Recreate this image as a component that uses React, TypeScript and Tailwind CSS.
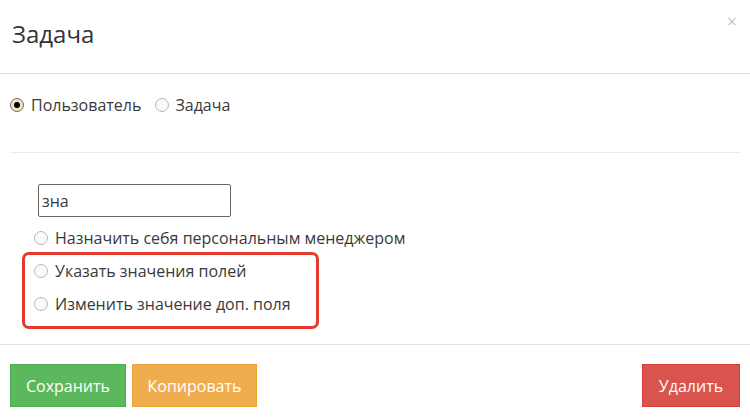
import React from "react";

function Radio({ checked = false }: { checked?: boolean }) {
  return checked ? (
    <span className="flex h-[14px] w-[14px] shrink-0 items-center justify-center rounded-full border border-[#6b6b6b] bg-[#f4e3c1]">
      <span className="h-[6px] w-[6px] rounded-full bg-black" />
    </span>
  ) : (
    <span className="h-[14px] w-[14px] shrink-0 rounded-full border border-[#b8b8b8] bg-[#fafafa]" />
  );
}

function Option({ label, h = "h-[33px]" }: { label: string; h?: string }) {
  return (
    <label className={`flex items-center gap-[7px] ${h}`}>
      <Radio />
      <span className="text-[16px] text-[#3a3a3a]">{label}</span>
    </label>
  );
}

export default function App() {
  return (
    <div
      className="h-[420px] w-[750px] overflow-hidden bg-white text-[#333]"
      style={{ fontFamily: '"Open Sans", "Liberation Sans", sans-serif' }}
    >
      {/* Header */}
      <div className="flex h-[74px] items-start justify-between border-b border-[#e0e0e0] pl-[12px] pr-[13px]">
        <h1 className="pt-[18px] text-[24px] font-normal leading-[32px] text-[#333]">Задача</h1>
        <span className="pt-[12px] text-[18px] leading-none text-[#c8c8c8]">×</span>
      </div>

      {/* Body */}
      <div className="px-[10px]">
        <div className="flex h-[79px] items-start gap-[7px] border-b border-[#ebebeb] pt-[19px]">
          <label className="flex h-[24px] items-center gap-[7px]">
            <Radio checked />
            <span className="text-[16px] text-[#3a3a3a]">Пользователь</span>
          </label>
          <label className="ml-[7px] flex h-[24px] items-center gap-[6px]">
            <Radio />
            <span className="text-[16px] text-[#3a3a3a]">Задача</span>
          </label>
        </div>

        <div className="pb-[15px] pt-[31px]">
          <div className="ml-[28px] flex h-[33px] w-[193px] items-center rounded-[2px] border border-[#666] px-[3px] text-[16px] text-[#3a3a3a]">
            зна
          </div>
          <div className="mt-[4px] pl-[24px]">
            <Option label="Назначить себя персональным менеджером" />
          </div>
          <div className="-mt-[2px] ml-[12px] w-[297px] rounded-[7px] border-[3px] border-[#e3392f] pb-[6px] pl-[9px]">
            <Option label="Указать значения полей" h="h-[32px]" />
            <Option label="Изменить значение доп. поля" />
          </div>
        </div>
      </div>

      {/* Footer */}
      <div className="flex items-start justify-between border-t border-[#e0e0e0] px-[10px] pt-[19px]">
        <div className="flex gap-[6px]">
          <button className="h-[43px] w-[116px] border border-[#4cae4c] bg-[#5cb85c] text-[16px] text-white">
            Сохранить
          </button>
          <button className="h-[43px] w-[125px] border border-[#eea236] bg-[#f0ad4e] text-[16px] text-white">
            Копировать
          </button>
        </div>
        <button className="h-[43px] w-[98px] border border-[#d43f3a] bg-[#d9534f] text-[16px] text-white">
          Удалить
        </button>
      </div>
    </div>
  );
}
